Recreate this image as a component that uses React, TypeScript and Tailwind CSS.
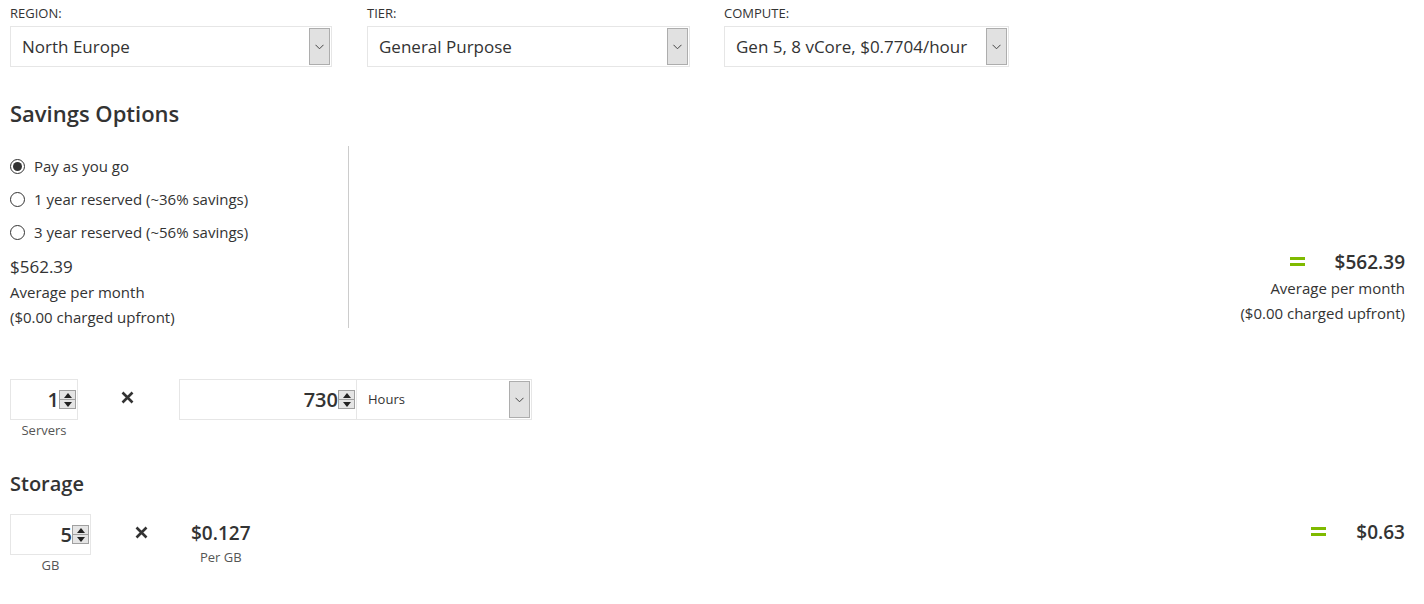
import React from "react";

const font = { fontFamily: '"Open Sans", "Noto Sans", sans-serif' };

const Chevron = () => (
  <svg width="9" height="6" viewBox="0 0 9 6" fill="none">
    <path d="M0.5 0.8 L4.5 4.8 L8.5 0.8" stroke="#444" strokeWidth="1" />
  </svg>
);

const DropButton = () => (
  <div className="flex items-center justify-center w-[21px] self-stretch my-px mr-px bg-[#e1e1e1] border border-[#adadad]">
    <Chevron />
  </div>
);

const Select = ({ value, width, small }: { value: string; width: string; small?: boolean }) => (
  <div className={`flex items-center h-[41px] border border-[#e6e6e6] bg-white ${width}`}>
    <span className={`flex-1 pl-[11px] text-[#333] ${small ? "text-[13px]" : "text-[17px]"}`}>{value}</span>
    <DropButton />
  </div>
);

const Spinner = () => (
  <div className="flex flex-col w-[17px] h-[19px] border border-[#a0a0a0] bg-[#e5e5e5]">
    <div className="flex-1 flex items-center justify-center border-b border-[#a0a0a0]">
      <div className="w-0 h-0 border-l-[4px] border-r-[4px] border-b-[5px] border-l-transparent border-r-transparent border-b-[#222]" />
    </div>
    <div className="flex-1 flex items-center justify-center">
      <div className="w-0 h-0 border-l-[4px] border-r-[4px] border-t-[5px] border-l-transparent border-r-transparent border-t-[#222]" />
    </div>
  </div>
);

const NumberBox = ({ value, width }: { value: string; width: string }) => (
  <div className={`flex items-center justify-end h-[41px] border border-[#e6e6e6] bg-white pr-px ${width}`}>
    <span className="text-[20px] font-semibold text-[#333] leading-none">{value}</span>
    <Spinner />
  </div>
);

const Radio = ({ checked, label }: { checked?: boolean; label: string }) => (
  <label className="flex items-center gap-[9px] h-[33px]">
    <span className="flex items-center justify-center w-[15px] h-[15px] rounded-full border border-[#333] bg-white">
      {checked && <span className="w-[9px] h-[9px] rounded-full bg-[#333]" />}
    </span>
    <span className="text-[15px] text-[#333]">{label}</span>
  </label>
);

const Times = () => (
  <svg width="13" height="13" viewBox="0 0 13 13">
    <path d="M1.5 1.5 L11.5 11.5 M11.5 1.5 L1.5 11.5" stroke="#333" strokeWidth="2.6" />
  </svg>
);

const Equals = () => (
  <svg width="15" height="10" viewBox="0 0 15 10">
    <rect x="0" y="0" width="15" height="3" fill="#7fba00" />
    <rect x="0" y="6" width="15" height="3" fill="#7fba00" />
  </svg>
);

export default function App() {
  return (
    <div className="w-[1424px] h-[604px] bg-white text-[#333] pl-[10px] pr-[19px] overflow-hidden" style={font}>
      {/* top selects */}
      <div className="flex pt-[3px]">
        <div className="w-[357px]">
          <div className="text-[13px] h-[23px] leading-[20px]">REGION:</div>
          <Select value="North Europe" width="w-[322px]" />
        </div>
        <div className="w-[357px]">
          <div className="text-[13px] h-[23px] leading-[20px]">TIER:</div>
          <Select value="General Purpose" width="w-[323px]" />
        </div>
        <div>
          <div className="text-[13px] h-[23px] leading-[20px]">COMPUTE:</div>
          <Select value="Gen 5, 8 vCore, $0.7704/hour" width="w-[285px]" />
        </div>
      </div>

      <h2 className="text-[22px] font-semibold mt-[31px] leading-[30px]">Savings Options</h2>

      <div className="flex items-start mt-[18px]">
        <div className="w-[339px] border-r border-[#ccc] h-[182px] pt-[4px]">
          <Radio checked label="Pay as you go" />
          <Radio label="1 year reserved (~36% savings)" />
          <Radio label="3 year reserved (~56% savings)" />
          <div className="text-[17px] leading-[26px] mt-[5px]">$562.39</div>
          <div className="text-[15px] leading-[25px]">Average per month</div>
          <div className="text-[15px] leading-[25px]">($0.00 charged upfront)</div>
        </div>
        <div className="flex-1 flex flex-col items-end pt-[102px]">
          <div className="flex items-center gap-[30px]">
            <Equals />
            <span className="text-[19px] font-semibold leading-[28px]">$562.39</span>
          </div>
          <div className="text-[15px] leading-[25px]">Average per month</div>
          <div className="text-[15px] leading-[24px]">($0.00 charged upfront)</div>
        </div>
      </div>

      {/* compute quantity row */}
      <div className="flex items-start mt-[51px]">
        <div className="flex flex-col items-center w-[68px]">
          <NumberBox value="1" width="w-[68px]" />
          <span className="text-[13px] text-[#555] leading-[20px]">Servers</span>
        </div>
        <div className="w-[101px] flex justify-center pt-[12px] pr-[2px]">
          <Times />
        </div>
        <NumberBox value="730" width="w-[178px]" />
        <Select value="Hours" width="w-[176px] -ml-px" small />
      </div>

      <h3 className="text-[20px] font-semibold mt-[30px] leading-[28px]">Storage</h3>

      <div className="flex items-start mt-[16px]">
        <div className="flex flex-col items-center w-[81px]">
          <NumberBox value="5" width="w-[81px]" />
          <span className="text-[13px] text-[#555] leading-[20px]">GB</span>
        </div>
        <div className="w-[100px] flex justify-center pt-[12px]">
          <Times />
        </div>
        <div className="flex flex-col items-center pt-[6px]">
          <span className="text-[19px] font-semibold leading-[26px]">$0.127</span>
          <span className="text-[13px] text-[#555] leading-[22px]">Per GB</span>
        </div>
        <div className="flex-1 flex justify-end items-center gap-[30px] pt-[5px]">
          <Equals />
          <span className="text-[19px] font-semibold leading-[26px]">$0.63</span>
        </div>
      </div>
    </div>
  );
}
